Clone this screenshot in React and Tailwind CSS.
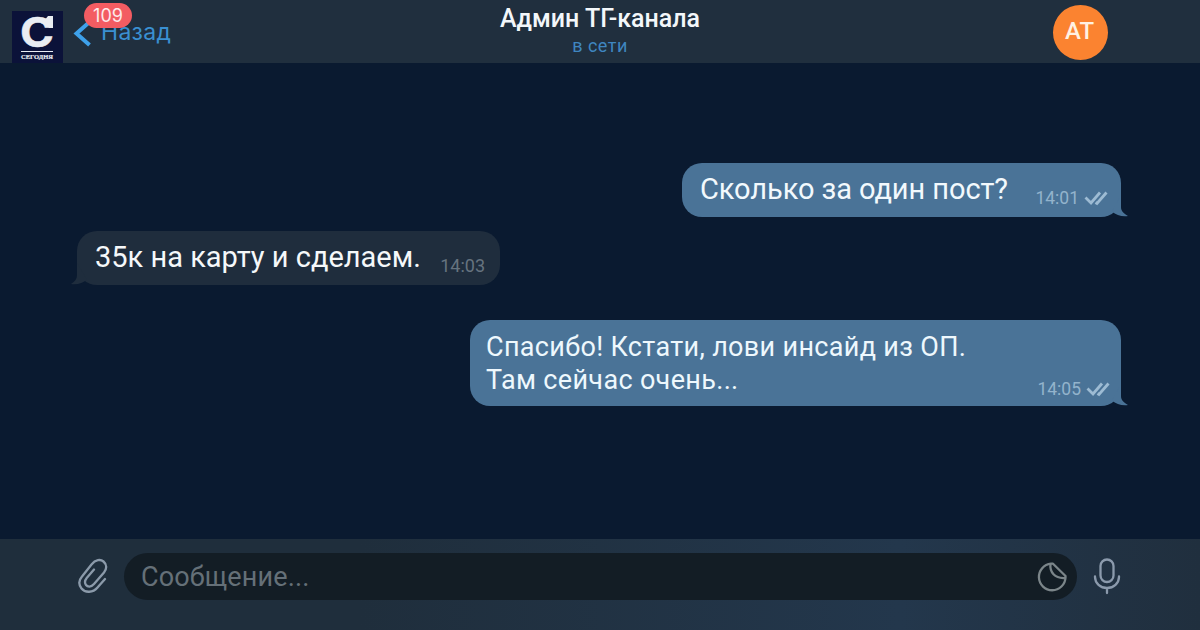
import React from 'react';

// Double tick shown next to delivered messages
function ReadTicks() {
  return (
    <svg className="h-[15px] w-6 shrink-0" viewBox="0 0 24 15" fill="none" stroke="#9dbbd3" strokeWidth="2.8">
      <path d="M1.500 6.500l5.500 5.500L16 1.500" />
      <path d="M11.500 11.500l1.500 1L22.500 1.500" />
    </svg>
  );
}

function TailRight() {
  return (
    <svg className="absolute -right-[7px] bottom-0 h-[22px] w-[30px]" viewBox="0 0 30 22" fill="#4a7397">
      <path d="M23 0v12c0 4 2.500 6.500 7 9c-6 .8-12-.8-16-4.500z" />
    </svg>
  );
}

function TailLeft() {
  return (
    <svg className="absolute -left-[6px] bottom-0 h-[22px] w-[30px]" viewBox="0 0 30 22" fill="#1f2d3d">
      <path d="M6 0v12c0 4-2 6.500-6 9c6 1 12-.8 16-4.500z" />
    </svg>
  );
}

function ChannelLogo() {
  return (
    <div className="ml-3 mt-[11px] h-[52px] w-[51px] shrink-0 bg-[#0b1239] text-[#e9edf2]">
      <svg className="h-[52px] w-[51px] overflow-visible" viewBox="0 0 51 52" fill="currentColor">
        <text x="8" y="35.500" fontFamily="Inter" fontWeight="700" fontSize="41" textLength="34" lengthAdjust="spacingAndGlyphs" stroke="currentColor" strokeWidth="0.5">С</text>
        <path d="M36 5h5v12h-4l-5-7z" />
        <rect x="9" y="40" width="32" height="1" />
        <text x="9" y="47.500" fontFamily="Liberation Serif" fontWeight="700" fontSize="6.5" textLength="32" lengthAdjust="spacingAndGlyphs" stroke="currentColor" strokeWidth="0.2">СЕГОДНЯ</text>
      </svg>
    </div>
  );
}

function Header() {
  return (
    <header className="grid h-[63px] shrink-0 grid-cols-3 bg-[#202f3e]">
      <div className="flex items-start">
        <ChannelLogo />
        <div className="relative ml-[10px] mt-5 flex">
          <svg className="h-[27px] w-[18px]" viewBox="0 0 18 27" fill="none" stroke="#3ea1ea" strokeWidth="4">
            <path d="M16.500 2L3.500 13.500l13 11.500" />
          </svg>
          <span className="ml-[10px] -mt-[2px] text-[23px] leading-7 tracking-[0.3px] text-[#3a90d2] font-['Inter',sans-serif]">Назад</span>
          <span className="absolute -top-[17px] left-[11px] flex h-[25px] w-12 items-center justify-center rounded-full bg-[#f35c62] pt-px text-lg text-[#fde9ea] font-['Inter',sans-serif]">109</span>
        </div>
      </div>
      <div className="flex flex-col items-center">
        <h1 className="mt-[3px] whitespace-nowrap text-[25px] font-medium leading-[31px] text-[#f3f7fa]">Админ ТГ-канала</h1>
        <p className="text-[18px] leading-6 tracking-[0.5px] text-[#3f86c0]">в сети</p>
      </div>
      <div className="flex justify-end pr-[92px] pt-[5px]">
        <div className="flex h-[55px] w-[55px] items-center justify-center rounded-full bg-[#fb8330] pb-[3px] pr-[2px] text-[24px] font-medium text-[#fff1e2]">АТ</div>
      </div>
    </header>
  );
}

function Chat() {
  return (
    <main className="flex grow flex-col bg-[#0a1a30] pl-[77px] pr-[79px]">
      <div className="relative mt-[100px] flex h-[54px] w-[439px] justify-between self-end rounded-[20px] bg-[#4a7397] pl-[18px] pr-[13px]">
        <TailRight />
        <p className="relative whitespace-nowrap text-[29px] leading-[52px] tracking-[-0.080px] text-[#f2f9fd]">Сколько за один пост?</p>
        <div className="relative flex items-center gap-[5px] self-end pb-[7px] text-[17.500px] leading-6 text-[#93b3cc]">
          <span>14:01</span>
          <ReadTicks />
        </div>
      </div>

      <div className="relative mt-[14px] flex h-[54px] w-[423px] justify-between rounded-[20px] bg-[#1f2d3d] pl-[18px] pr-[15px]">
        <TailLeft />
        <p className="relative whitespace-nowrap text-[29px] leading-[52px] text-[#f5f8fa]">35к на карту и сделаем.</p>
        <span className="self-end pb-[7px] text-[18px] leading-6 text-[#66737f]">14:03</span>
      </div>

      <div className="relative mt-[35px] flex h-[86px] w-[651px] justify-between self-end rounded-[20px] bg-[#4a7397] pl-[16px] pr-[11px] pt-[11px]">
        <TailRight />
        <p className="relative whitespace-nowrap text-[27px] leading-[33px] tracking-[0.330px] text-[#eef8fd]">
          Спасибо! Кстати, лови инсайд из ОП.
          <br />
          Там сейчас очень...
        </p>
        <div className="relative flex items-center gap-[5px] self-end pb-[5px] text-[17.500px] leading-6 text-[#93b3cc]">
          <span>14:05</span>
          <ReadTicks />
        </div>
      </div>
    </main>
  );
}

function Composer() {
  return (
    <footer className="flex h-[91px] shrink-0 items-start bg-linear-to-r from-[#1f2e3c] from-30% via-[#23374c] via-75% to-[#202f3e] pl-[77px] pt-[14px]">
      <svg className="mt-[5px] h-9 w-8" viewBox="0 0 32 36" fill="none" stroke="#8b9aaa" strokeWidth="2.3" strokeLinecap="round" strokeLinejoin="round">
        <path d="M28 21L20.500 29.500C16 35 8 35 4.500 30.500C1 26 2 22 5 18.500L14.500 6.500C18.500 1.500 23.500 1 26.500 3.500C30 6.500 30 11 27 14.500L17 26C14 29.500 10.500 29 9 27C7.200 24.500 7.700 22.500 9.700 20L17 11.500" />
      </svg>
      <div className="ml-[15px] flex h-[47px] w-[953px] items-center justify-between rounded-full bg-[#131d25] pl-[17px] pr-[9px]">
        <span className="pt-[2px] text-[27px] tracking-[0.150px] text-[#657078]">Сообщение...</span>
        <svg className="h-[30px] w-[31px]" viewBox="0 0 31 30" fill="none" stroke="#7b8589" strokeWidth="2.3" strokeLinejoin="round">
          <path d="M14 1.700A13.300 13.300 0 1 0 28.500 15.500V14L16 1.700z" />
          <path d="M13.500 1.700C12.500 10 17.500 17 28.500 16" />
        </svg>
      </div>
      <svg className="ml-[16px] mt-[4px] h-[38px] w-7" viewBox="0 0 28 38" fill="none" stroke="#8b9aac" strokeWidth="2.3" strokeLinecap="round">
        <rect x="7.500" y="2.500" width="13" height="22.500" rx="6.500" />
        <path d="M2 19.500v.5a12 11 0 0 0 24 0v-.5M14 31v5" />
      </svg>
    </footer>
  );
}

export default function App() {
  return (
    <div className="flex h-[630px] w-[1200px] flex-col overflow-hidden bg-[#0a1a30] font-['Roboto',sans-serif]">
      <Header />
      <Chat />
      <Composer />
    </div>
  );
}
